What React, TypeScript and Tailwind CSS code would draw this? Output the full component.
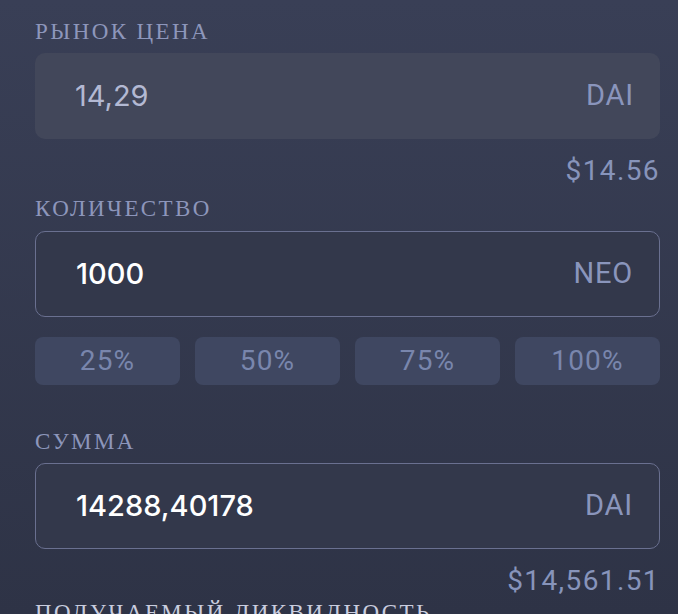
import React from "react";

const labelCls =
  "block font-['Liberation_Serif',serif] text-[23px] leading-[24px] tracking-[2.4px] uppercase text-[#8d96bb]";

const valueFont = "font-['Inter','Noto_Sans',sans-serif]";
const unitFont = "font-['Roboto','Liberation_Sans',sans-serif]";

const Field: React.FC<{
  value: string;
  unit: string;
  filled?: boolean;
}> = ({ value, unit, filled }) => (
  <div
    className={`h-[86px] rounded-[10px] flex items-center justify-between pl-[40px] pr-[26px] ${
      filled
        ? "bg-[#42475a]"
        : "border-[1.5px] border-[#6a7090] bg-[#33384b]"
    }`}
  >
    <span
      className={`${valueFont} text-[29px] ${
        filled ? "text-[#b3b9d3]" : "text-white font-medium"
      }`}
    >
      {value}
    </span>
    <span className={`${unitFont} text-[29px] tracking-[0.8px] text-[#8a95bc]`}>
      {unit}
    </span>
  </div>
);

const Usd: React.FC<{ children: React.ReactNode }> = ({ children }) => (
  <div
    className={`${unitFont} mt-[16px] text-right text-[28px] leading-[32px] tracking-[1.4px] text-[#8794bb]`}
  >
    {children}
  </div>
);

export default function App() {
  const percents = ["25%", "50%", "75%", "100%"];
  return (
    <div className="w-[678px] h-[614px] overflow-hidden bg-gradient-to-b from-[#393f56] to-[#2e3346]">
      <div className="pl-[35px] pr-[18px] pt-[20px]">
        <label className={labelCls}>Рынок цена</label>
        <div className="mt-[9px]">
          <Field value="14,29" unit="DAI" filled />
        </div>
        <Usd>$14.56</Usd>

        <label className={`${labelCls} mt-[10px]`}>Количество</label>
        <div className="mt-[10px]">
          <Field value="1000" unit="NEO" />
        </div>

        <div className="mt-[20px] grid grid-cols-4 gap-[15px]">
          {percents.map((p) => (
            <button
              key={p}
              className={`${unitFont} h-[48px] rounded-[8px] bg-[#3f4761] text-[28px] tracking-[1.2px] text-[#7986ad]`}
            >
              {p}
            </button>
          ))}
        </div>

        <label className={`${labelCls} mt-[45px]`}>Сумма</label>
        <div className="mt-[9px]">
          <Field value="14288,40178" unit="DAI" />
        </div>
        <Usd>$14,561.51</Usd>

        <label className={`${labelCls} mt-[4px] text-[#c9cddf]`}>
          Получаемый ликвидность
        </label>
      </div>
    </div>
  );
}
